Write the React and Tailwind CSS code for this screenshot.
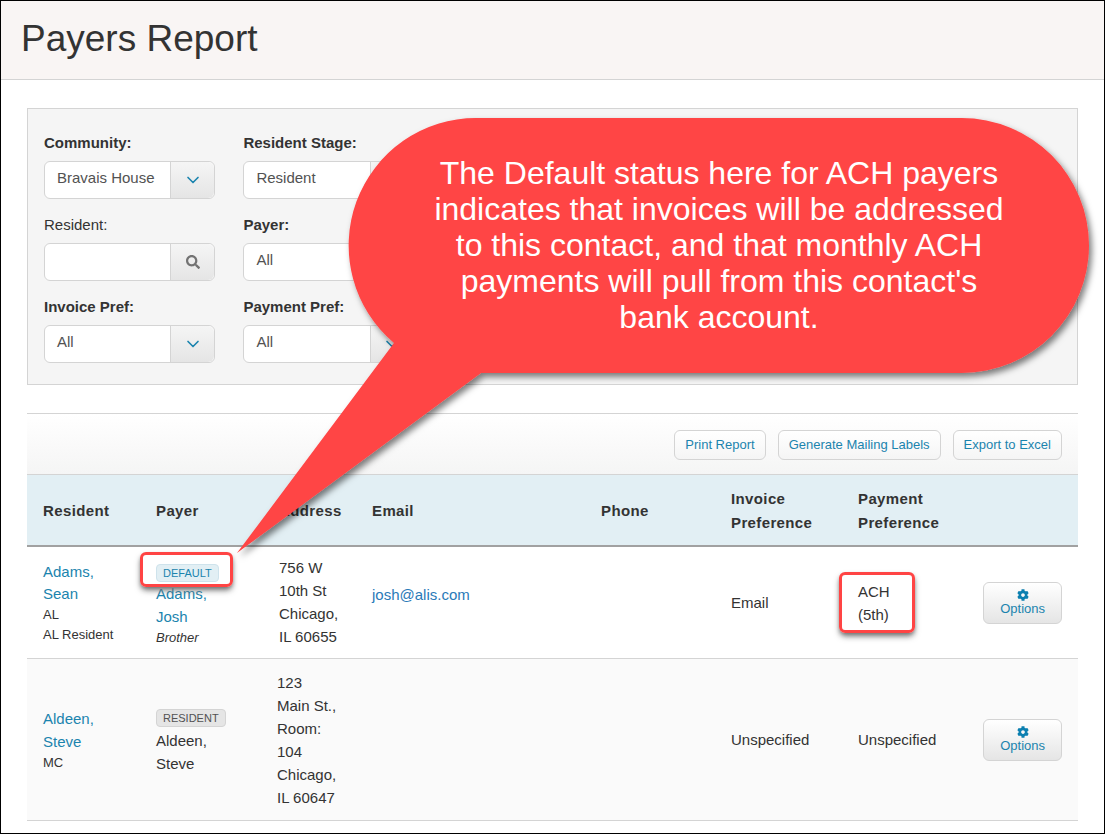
import React from "react";
import { ChevronDown } from "lucide-react";
import { FaCog, FaSearch } from "react-icons/fa";

const cols = "grid grid-cols-[113px_123px_93px_229px_130px_127px_1fr_auto] pl-4";
const link = "text-[#1b84ae]";
const small = "text-[13px] leading-5";

function Field({ label, value, bold = true, search = false }) {
  return (
    <div>
      <div className={`mb-2 leading-5 ${bold ? "font-bold" : ""}`}>{label}</div>
      <div className="flex rounded-md border border-neutral-300 bg-white">
        <div className="flex-1 px-3 pb-2 pt-1 leading-6 text-neutral-600">{value || "\u00a0"}</div>
        <div className="flex w-11 items-center justify-center rounded-r-md border-l border-neutral-300 bg-gradient-to-b from-neutral-100 to-neutral-200">
          {search ? (
            <FaSearch className="h-3.5 w-3.5 text-neutral-500" />
          ) : (
            <ChevronDown className="h-5 w-5 text-[#1b84ae]" />
          )}
        </div>
      </div>
    </div>
  );
}

function ToolButton({ children }) {
  return (
    <button className="rounded-md border border-neutral-300 bg-gradient-to-b from-white to-neutral-100 px-2.5 py-1 text-[13px] leading-5 text-[#1b84ae]">
      {children}
    </button>
  );
}

function Options() {
  return (
    <button className="flex flex-col items-center rounded-md border border-neutral-300 bg-gradient-to-b from-white to-neutral-200 px-4 py-1.5 text-[13px] leading-4 text-[#1b84ae]">
      <FaCog className="h-3 w-3 text-[#0b7fb0]" />
      Options
    </button>
  );
}

function Lines({ items, className = "" }) {
  return (
    <div className={className}>
      {items.map((t) => (
        <div key={t}>{t}</div>
      ))}
    </div>
  );
}

export default function App() {
  return (
    <div
      className="relative h-screen overflow-hidden border border-black bg-white text-[15px] text-[#333]"
      style={{ fontFamily: '"Liberation Sans", Arial, sans-serif' }}
    >
      <header className="flex h-[79px] items-center border-b border-neutral-300 bg-[#f9f5f4] px-5 pb-0.5">
        <h1 className="text-[37px]">Payers Report</h1>
      </header>

      <main className="px-[26px]">
        <section className="mt-7 grid grid-cols-5 gap-x-7 gap-y-4 border border-neutral-300 bg-neutral-100 pb-[21px] pl-4 pr-16 pt-6">
          <Field label="Community:" value="Bravais House" />
          <Field label="Resident Stage:" value="Resident" />
          <div className="col-span-3" />
          <Field label="Resident:" bold={false} search />
          <Field label="Payer:" value="All" />
          <div className="col-span-3" />
          <Field label="Invoice Pref:" value="All" />
          <Field label="Payment Pref:" value="All" />
        </section>

        <section className="mt-7">
          <div className="flex justify-end gap-3 border-y border-neutral-300 bg-gradient-to-b from-white to-neutral-100 px-4 pb-3.5 pt-4">
            <ToolButton>Print Report</ToolButton>
            <ToolButton>Generate Mailing Labels</ToolButton>
            <ToolButton>Export to Excel</ToolButton>
          </div>

          <div className={`${cols} h-18 items-center border-b-2 border-neutral-400 bg-[#e2eff4] pt-0.5 font-bold leading-6 tracking-wide`}>
            <div>Resident</div>
            <div>Payer</div>
            <div>Address</div>
            <div>Email</div>
            <div>Phone</div>
            <div>Invoice<br />Preference</div>
            <div>Payment<br />Preference</div>
          </div>

          <div className={`${cols} h-28 items-center border-b border-neutral-300 pr-4 leading-[23px]`}>
            <div>
              <div className={`${link} leading-[22px]`}>Adams,<br />Sean</div>
              <div className={small}>AL</div>
              <div className={small}>AL Resident</div>
            </div>
            <div className="pt-1.5">
              <span className="block w-fit rounded border border-[#cfe3ec] bg-[#e2eff4] px-1.5 text-[11px] leading-4 text-[#1b84ae]">DEFAULT</span>
              <div className={link}>Adams,<br />Josh</div>
              <div className={`${small} italic`}>Brother</div>
            </div>
            <Lines items={["756 W", "10th St", "Chicago,", "IL 60655"]} className="pb-0.5" />
            <div className="pb-4 text-[#2a7ab8]">josh@alis.com</div>
            <div />
            <div>Email</div>
            <Lines items={["ACH", "(5th)"]} />
            <Options />
          </div>

          <div className={`${cols} h-[162px] items-center border-b border-neutral-300 bg-neutral-50 pr-4 leading-[23px]`}>
            <div>
              <div className={link}>Aldeen,<br />Steve</div>
              <div className={small}>MC</div>
            </div>
            <div className="pt-1">
              <span className="block w-fit rounded border border-neutral-300 bg-neutral-200 px-1.5 text-[11px] leading-4 text-neutral-600">RESIDENT</span>
              <div className="mt-0.5">Aldeen,<br />Steve</div>
            </div>
            <Lines items={["123", "Main St.,", "Room:", "104", "Chicago,", "IL 60647"]} className="-ml-0.5" />
            <div />
            <div />
            <div>Unspecified</div>
            <div>Unspecified</div>
            <Options />
          </div>
        </section>
      </main>

      <div className="absolute left-[139px] top-[551px] h-[35px] w-[93px] rounded-md border-[3px] border-[#ff4444] shadow-md shadow-neutral-500" />
      <div className="absolute left-[838px] top-[571px] h-[61px] w-[76px] rounded-md border-[3px] border-[#ff4444] shadow-md shadow-neutral-500" />

      <svg className="pointer-events-none absolute -left-px -top-px" width="1105" height="834" viewBox="0 0 1105 834">
        <defs>
          <filter id="callout-shadow" x="-10%" y="-10%" width="120%" height="120%">
            <feDropShadow dx="3" dy="4" stdDeviation="3" floodColor="#000" floodOpacity="0.5" />
          </filter>
        </defs>
        <path
          d="M476.5 118 H961.5 A127.5 127.5 0 0 1 961.5 373 H481 L237 553 L394 343 A127.5 127.5 0 0 1 476.5 118 Z"
          fill="#ff4444"
          filter="url(#callout-shadow)"
        />
      </svg>

      <div className="absolute left-[348px] top-[117px] flex h-[253px] w-[740px] items-center justify-center text-center text-[32px] leading-9 text-white">
        <p>
          The Default status here for ACH payers<br />
          indicates that invoices will be addressed<br />
          to this contact, and that monthly ACH<br />
          payments will pull from this contact's<br />
          bank account.
        </p>
      </div>
    </div>
  );
}
